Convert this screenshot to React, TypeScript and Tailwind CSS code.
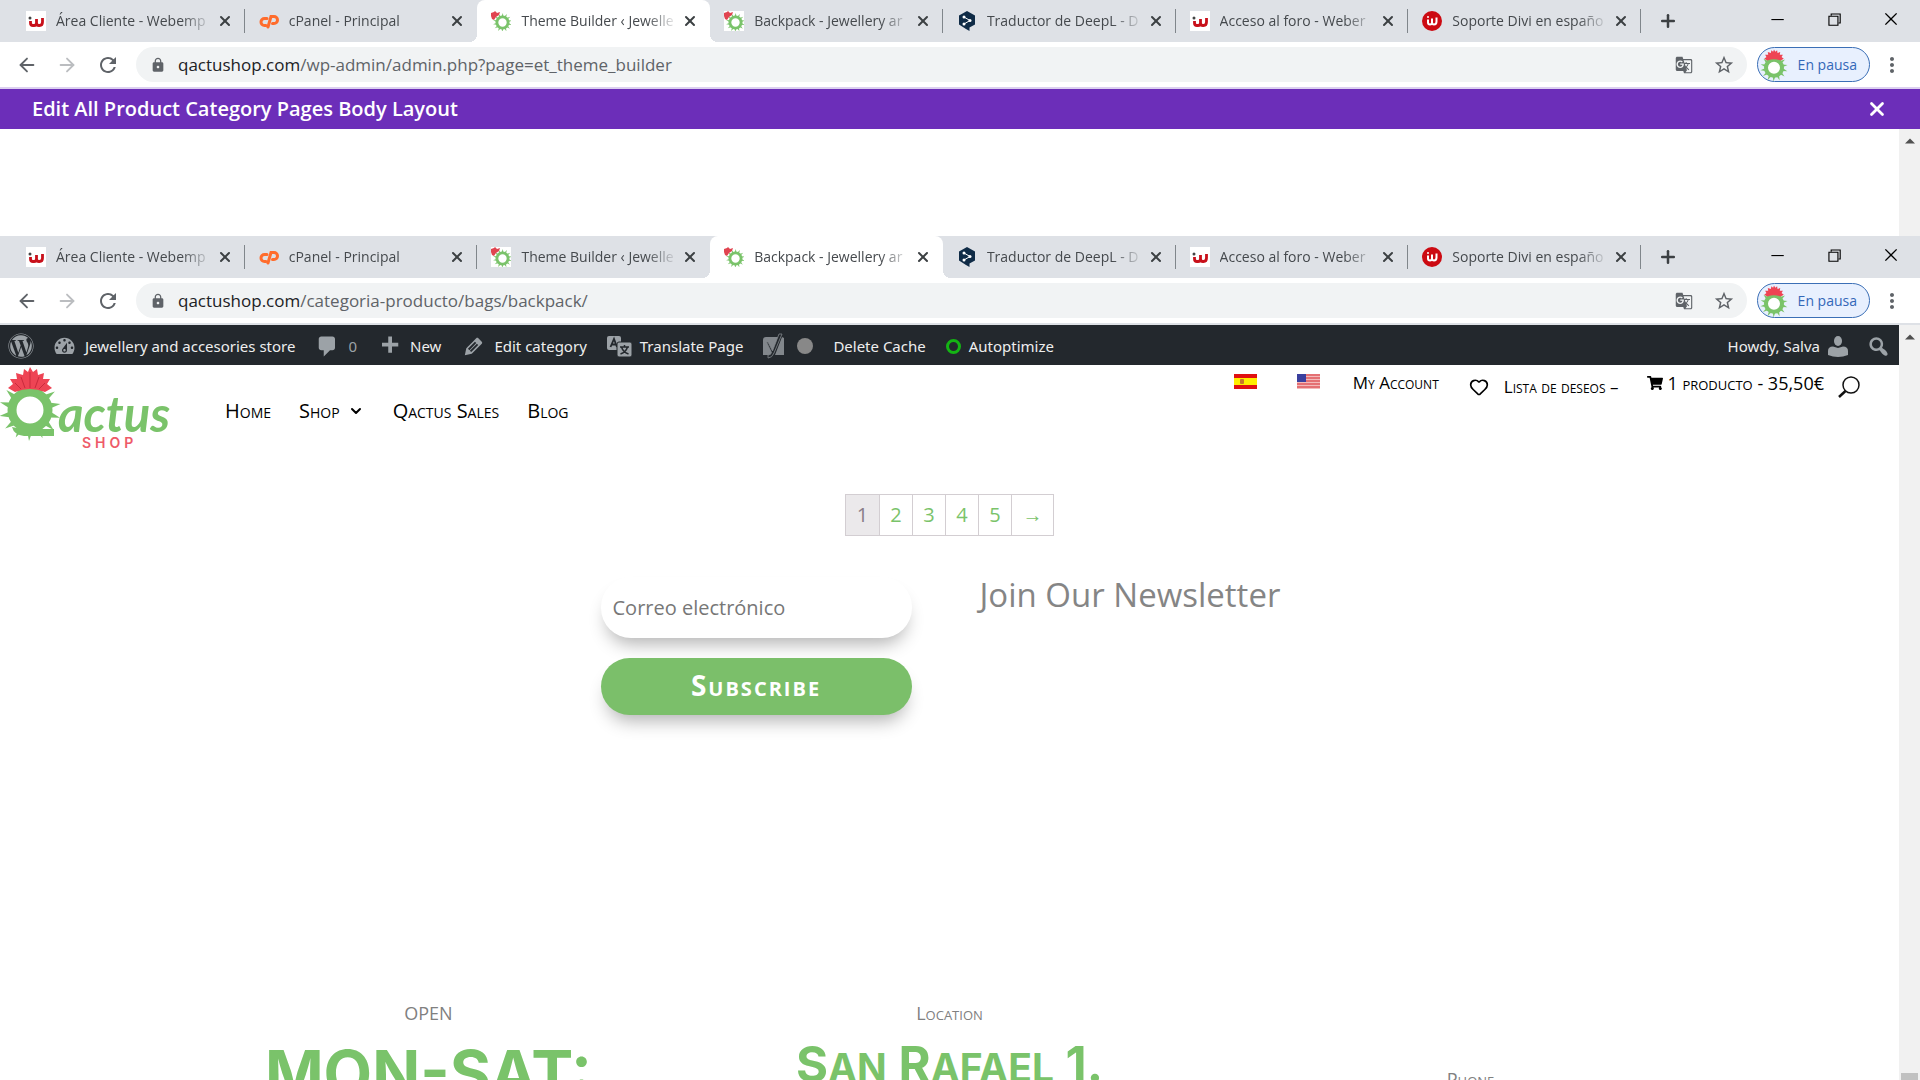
import type { ReactNode } from 'react';
import { ArrowLeft, ArrowRight, ChevronDown, Heart, Plus, X } from 'lucide-react';
import { FaShoppingCart, FaWordpress } from 'react-icons/fa';
import { MdGTranslate, MdLock, MdMoreVert, MdRefresh, MdStarBorder } from 'react-icons/md';
import { VscChromeClose, VscChromeMinimize, VscChromeRestore } from 'react-icons/vsc';

type Favicon = 'webempresa' | 'cpanel' | 'cactus' | 'deepl' | 'soporte';

const tabs: { title: string; icon: Favicon }[] = [
  { title: 'Área Cliente - Webemp', icon: 'webempresa' },
  { title: 'cPanel - Principal', icon: 'cpanel' },
  { title: 'Theme Builder ‹ Jewelle', icon: 'cactus' },
  { title: 'Backpack - Jewellery ar', icon: 'cactus' },
  { title: 'Traductor de DeepL - D', icon: 'deepl' },
  { title: 'Acceso al foro - Weber', icon: 'webempresa' },
  { title: 'Soporte Divi en españo', icon: 'soporte' },
];

const spikes = Array.from({ length: 14 }, (_, i) => i * (360 / 14));

function CactusRing() {
  return (
    <g>
      {spikes.map((angle) => (
        <path key={angle} d="M-3 -20L1 -31L3 -20Z" fill="#7ac36a" transform={`rotate(${angle})`} />
      ))}
      <circle r="18" fill="#fff" stroke="#7ac36a" strokeWidth="9" />
    </g>
  );
}

function Flower() {
  return (
    <path
      d="M-15 12L-22 8L-17 4L-20 -1L-13 -1L-14 -7L-7 -5L-6 -11L-2 -8L0 -13L3 -8L7 -11L8 -5L14 -7L13 -1L20 -1L17 4L22 8L15 12Q0 6 -15 12Z"
      fill="#ee4454"
    />
  );
}

function CactusAvatar() {
  return (
    <svg viewBox="0 0 60 72" className="h-8 w-7" aria-hidden="true">
      <g transform="translate(30 42)">
        <CactusRing />
      </g>
      <g transform="translate(30 14)">
        <Flower />
      </g>
    </svg>
  );
}

function TabIcon({ name }: { name: Favicon }) {
  switch (name) {
    case 'webempresa':
      return (
        <svg viewBox="0 0 20 20" className="size-5 shrink-0" aria-hidden="true">
          <rect width="20" height="20" fill="#fff" />
          <circle cx="4" cy="7" r="1.500" fill="#444" />
          <path d="M4.500 10v2q0 2.500 2.500 2.500h1q2.500 0 2.500-2.500V8M10.500 12q0 2.500 2.500 2.500h.500q3 0 3-3.500V7" fill="none" stroke="#c8101a" strokeWidth="2.800" />
        </svg>
      );
    case 'cpanel':
      return (
        <svg viewBox="0 0 20 20" className="size-5 shrink-0" fill="none" stroke="#ff6c2c" strokeWidth="3" aria-hidden="true">
          <path d="M8 7.500H5.500a3.500 3.500 0 0 0 0 7H7" strokeLinecap="round" />
          <path d="M9 16L12 5.500H15a3.200 3.200 0 0 1 0 7H13.500" strokeLinecap="round" />
        </svg>
      );
    case 'cactus':
      return (
        <svg viewBox="0 0 20 20" className="size-5 shrink-0" aria-hidden="true">
          <rect width="20" height="20" fill="#fff" />
          <g transform="translate(11.500 11.500) scale(.31)">
            <CactusRing />
          </g>
          <path d="M0 2L3 1L4 0L6 2L9 1L8 4L5 6L3 9L1 8L0 5Z" fill="#e04450" />
        </svg>
      );
    case 'deepl':
      return (
        <svg viewBox="0 0 20 20" className="size-5 shrink-0" aria-hidden="true">
          <path d="M10 0L18 4.500V13.500L12.500 16.500V20L9 18L2 13.500V4.500Z" fill="#0f2b46" />
          <path d="M7 6L13 9.500L7 13" fill="none" stroke="#fff" strokeWidth="1" />
          <circle cx="7" cy="6" r="1.500" fill="#fff" />
          <circle cx="13" cy="9.500" r="1.500" fill="#fff" />
          <circle cx="7" cy="13" r="1.500" fill="#fff" />
        </svg>
      );
    case 'soporte':
      return (
        <svg viewBox="0 0 20 20" className="size-5 shrink-0" aria-hidden="true">
          <circle cx="10" cy="10" r="10" fill="#cc0a12" />
          <circle cx="6" cy="6" r="1" fill="#fff" />
          <path d="M6 8.500v3q0 2 2 2t2-2V7.500M10 11.500q0 2 2 2q2.500 0 2.500-3V6.500" fill="none" stroke="#fff" strokeWidth="2" />
        </svg>
      );
  }
}

function BrowserChrome({ active, path, label }: { active: number; path: string; label: string }) {
  return (
    <header className="font-['Open_Sans',sans-serif]">
      <div className="flex h-[42px] items-center bg-[#dee1e6] pl-3">
        {tabs.map((tab, i) => {
          const isActive = i === active;
          const divider = !isActive && i !== active - 1;
          return (
            <div
              key={i}
              className={`relative flex min-w-0 flex-1 items-center self-stretch pl-[14px] pr-3 ${
                isActive
                  ? "rounded-t-lg bg-white before:absolute before:bottom-0 before:-left-2 before:size-2 before:bg-[radial-gradient(circle_at_0_0,transparent_8px,white_8px)] before:content-[''] after:absolute after:bottom-0 after:-right-2 after:size-2 after:bg-[radial-gradient(circle_at_100%_0,transparent_8px,white_8px)] after:content-['']"
                  : ''
              }`}
            >
              <TabIcon name={tab.icon} />
              <button className="ml-[10px] min-w-0 flex-1 overflow-hidden text-left text-sm whitespace-nowrap text-[#45494d] [mask-image:linear-gradient(to_right,black_80%,transparent)]">
                {tab.title}
              </button>
              <button aria-label={`Cerrar ${tab.title}`} className="ml-1 text-[#3c4043]">
                <X className="size-4" strokeWidth={3} />
              </button>
              {divider && <span className="absolute right-0 h-6 w-px bg-[#80868b]" />}
            </div>
          );
        })}
        <div className="flex w-[279px] shrink-0 items-center justify-between self-stretch pr-5 pl-[17px] text-black">
          <button aria-label="Nueva pestaña" className="text-[#3c4043]">
            <Plus className="size-5" strokeWidth={3} />
          </button>
          <div className="flex items-center gap-[39px] pb-[5px]">
            <button aria-label="Minimizar">
              <VscChromeMinimize className="size-[18px]" />
            </button>
            <button aria-label="Restaurar">
              <VscChromeRestore className="size-[18px]" />
            </button>
            <button aria-label="Cerrar">
              <VscChromeClose className="size-[18px]" />
            </button>
          </div>
        </div>
      </div>

      <div className="flex h-[45px] items-center bg-white pr-4 pl-4 text-[#5f6368]">
        <button aria-label="Atrás" className="mr-[18px]">
          <ArrowLeft className="size-[22px]" />
        </button>
        <button aria-label="Adelante" className="mr-[18px] text-[#bbbdc0]">
          <ArrowRight className="size-[22px]" />
        </button>
        <button aria-label="Recargar" className="mr-4">
          <MdRefresh className="size-6" />
        </button>
        <div className="flex h-[35px] flex-1 items-center rounded-full bg-[#f1f3f4] pr-3 pl-[14px]">
          <MdLock className="mr-3 size-4" />
          <div aria-label={label} className="flex-1 text-[17px] leading-6">
            <span className="text-[#202124]">qactushop.com</span>
            {path}
          </div>
          <button aria-label="Traducir esta página" className="mr-5">
            <MdGTranslate className="size-[18px]" />
          </button>
          <button aria-label="Añadir a marcadores">
            <MdStarBorder className="size-[22px]" />
          </button>
        </div>
        <button className="ml-[10px] flex h-[35px] items-center gap-[10px] rounded-full border border-[#3b6fb6] bg-[#e8f0fe] pr-3 pl-[2px] text-sm text-[#3367b8]">
          <CactusAvatar />
          En pausa
        </button>
        <button aria-label="Menú" className="ml-[10px]">
          <MdMoreVert className="size-6" />
        </button>
      </div>
    </header>
  );
}

function Scrollbar({ thumb }: { thumb?: boolean }) {
  return (
    <div className="flex w-[21px] shrink-0 flex-col items-center bg-[#f1f1f1] pt-[9px]">
      <svg viewBox="0 0 10 5" className="h-[6px] w-[10px]" aria-hidden="true">
        <path d="M0 5L5 0L10 5Z" fill="#505050" />
      </svg>
      {thumb && <div className="mt-auto h-[7px] w-[17px] bg-[#c1c1c1]" />}
    </div>
  );
}

function Dashicon({ d }: { d: string }) {
  return (
    <svg viewBox="0 0 20 20" className="size-[25px] shrink-0" fill="#9ca2a7" aria-hidden="true">
      <path d={d} />
    </svg>
  );
}

function AdminItem({ icon, children }: { icon?: ReactNode; children?: ReactNode }) {
  return (
    <a href="#" className="flex items-center gap-2 whitespace-nowrap">
      {icon}
      {children}
    </a>
  );
}

function AdminBar() {
  return (
    <nav className="flex h-10 items-center bg-[#23282d] pt-[2px] pr-2 pl-2 font-['Noto_Sans',sans-serif] text-[15px] text-[#eee]">
      <AdminItem icon={<FaWordpress className="size-[26px] text-[#9ca2a7]" />} />
      <div className="ml-[18px] flex items-center gap-5">
        <AdminItem
          icon={
            <Dashicon d="M3.760 16h12.480c1.100-1.370 1.760-3.110 1.760-5 0-4.420-3.580-8-8-8s-8 3.580-8 8c0 1.890.660 3.630 1.760 5zM10 4c.550 0 1 .450 1 1s-.450 1-1 1-1-.450-1-1 .450-1 1-1zM6 6c.550 0 1 .450 1 1s-.450 1-1 1-1-.450-1-1 .450-1 1-1zm8 0c.550 0 1 .450 1 1s-.450 1-1 1-1-.450-1-1 .450-1 1-1zm-5.370 5.550L12 7v6c0 1.100-.900 2-2 2s-2-.900-2-2c0-.570.240-1.080.630-1.450zM4 10c.550 0 1 .450 1 1s-.450 1-1 1-1-.450-1-1 .450-1 1-1zm12 0c.550 0 1 .450 1 1s-.450 1-1 1-1-.450-1-1 .450-1 1-1zm-5 3c0-.550-.450-1-1-1s-1 .450-1 1 .450 1 1 1 1-.450 1-1z" />
          }
        >
          Jewellery and accesories store
        </AdminItem>
        <AdminItem icon={<Dashicon d="M5 2h9c1.100 0 2 .900 2 2v7c0 1.100-.900 2-2 2h-2l-5 5v-5H5c-1.100 0-2-.900-2-2V4c0-1.100.900-2 2-2z" />}>
          <span className="text-[#9ca2a7]">0</span>
        </AdminItem>
        <AdminItem icon={<Dashicon d="M17 7v3h-5v5H9v-5H4V7h5V2h3v5h5z" />}>New</AdminItem>
        <AdminItem
          icon={
            <Dashicon d="M13.890 3.390l2.710 2.720c.460.460.420 1.240.030 1.640l-8.010 8.020-5.560 1.160 1.160-5.580s7.600-7.630 7.990-8.030c.390-.390 1.220-.390 1.680.070zm-2.730 2.790l-5.590 5.610 1.110 1.110 5.540-5.650zm-2.970 8.230l5.580-5.600-1.070-1.080-5.590 5.600z" />
          }
        >
          Edit category
        </AdminItem>
        <AdminItem
          icon={
            <svg viewBox="0 0 25 21" className="h-[21px] w-[25px]" aria-hidden="true">
              <rect x="0" y="0" width="14" height="14" rx="2" fill="#9ca2a7" />
              <path d="M3.500 11L7 3L10 11M5 8.500H9" fill="none" stroke="#23282d" strokeWidth="1.800" />
              <rect x="10" y="6" width="15" height="15" rx="2" fill="#9ca2a7" stroke="#23282d" />
              <path d="M13 11H22M17.500 9V11M20.500 11Q19 16 13.500 18M14.500 11Q16 16 21.500 18" fill="none" stroke="#23282d" strokeWidth="1.500" />
            </svg>
          }
        >
          Translate Page
        </AdminItem>
        <AdminItem
          icon={
            <svg viewBox="0 0 22 26" className="h-[26px] w-[22px]" aria-hidden="true">
              <path d="M3 4H16L10 22H0V7Q0 4 3 4ZM21 5V22H12L19 4Z" fill="#82878c" />
              <path d="M5 9L9.500 18L16 1H19L11 20Q9 25 5 25V22Q8 22 8.500 19.500L3.500 9Z" fill="#23282d" stroke="#82878c" strokeWidth=".8" />
            </svg>
          }
        >
          <span className="ml-1 size-4 rounded-full bg-[#888]" />
        </AdminItem>
        <AdminItem>Delete Cache</AdminItem>
        <AdminItem icon={<span className="size-[15px] rounded-full border-[3px] border-[#14b414]" />}>Autoptimize</AdminItem>
      </div>
      <div className="ml-auto flex items-center gap-[18px]">
        <AdminItem>
          Howdy, Salva
          <svg viewBox="0 0 20 21" className="h-[21px] w-5" fill="#9ca2a7" aria-hidden="true">
            <ellipse cx="10" cy="5" rx="4" ry="5" />
            <path d="M0 19V15Q0 10.500 5 10.500L10 12L15 10.500Q20 10.500 20 15V19Q10 23 0 19Z" />
          </svg>
        </AdminItem>
        <button aria-label="Search">
          <Dashicon d="M12.140 4.180c1.870 1.870 2.110 4.750.720 6.890.120.100.220.210.360.310.200.160.470.360.810.590.340.240.560.390.660.470.420.310.730.570.940.780.320.320.600.650.840 1 .250.350.440.690.590 1.040.140.350.210.680.180 1-.020.320-.140.590-.360.810s-.490.340-.810.360c-.310.020-.650-.040-.990-.190-.350-.140-.700-.340-1.040-.590-.350-.240-.680-.520-1-.840-.210-.210-.470-.520-.770-.930-.100-.130-.250-.350-.470-.660-.220-.320-.400-.570-.560-.780-.160-.200-.290-.350-.440-.500-2.070 1.090-4.690.760-6.440-.980-2.140-2.150-2.140-5.640 0-7.780 2.150-2.150 5.630-2.150 7.780 0zm-1.410 6.360c1.360-1.370 1.360-3.580 0-4.950-1.370-1.370-3.590-1.370-4.950 0-1.370 1.370-1.370 3.580 0 4.950 1.360 1.370 3.580 1.370 4.950 0z" />
        </button>
      </div>
    </nav>
  );
}

function Logo() {
  return (
    <a href="#" aria-label="Qactus Shop" className="block">
      <svg viewBox="0 0 172 86" className="h-[86px] w-[172px]">
        <g transform="translate(30 45)">
          <CactusRing />
        </g>
        <path d="M22 64H54V71H24Q14 70 12 62Z" fill="#7ac36a" />
        <g transform="translate(30 15)">
          <Flower />
          <path d="M0 8V-8M-5 8L-9 -3M5 8L9 -3M-9 9L-15 3M9 9L15 3" stroke="#c92a3c" strokeWidth="1" />
        </g>
        <text x="58" y="67" fill="#7ac36a" className="font-['Lato',sans-serif] text-[49px] font-bold italic">
          actus
        </text>
        <text x="82" y="83" fill="#ee5a68" className="font-['Inter',sans-serif] text-[14px] font-semibold tracking-[4px]">
          SHOP
        </text>
      </svg>
    </a>
  );
}

function SpainFlag() {
  return (
    <svg viewBox="0 0 23 15" className="h-[15px] w-[23px]" role="img" aria-label="Español">
      <rect width="23" height="15" fill="#e01010" />
      <rect y="4" width="23" height="7" fill="#ffee00" />
      <rect x="6" y="5" width="4" height="5" rx="1" fill="#c9762a" />
    </svg>
  );
}

function UsFlag() {
  return (
    <svg viewBox="0 0 23 15" className="h-[15px] w-[23px]" role="img" aria-label="English">
      <rect width="23" height="15" fill="#f3b9b9" />
      <path d="M0 1H23M0 4H23M0 7H23M0 10H23M0 13H23" stroke="#e0585c" strokeWidth="1.500" />
      <rect width="9" height="8" fill="#3a3f9e" />
    </svg>
  );
}

function SiteHeader() {
  return (
    <div className="flex items-start font-['Open_Sans',sans-serif] text-black">
      <Logo />
      <nav className="ml-[53px] flex items-center gap-7 pt-8 text-xl leading-7 [font-variant-caps:small-caps]">
        <a href="#">Home</a>
        <a href="#" className="flex items-center gap-2">
          Shop
          <ChevronDown className="mr-px size-4" strokeWidth={3} />
        </a>
        <a href="#">Qactus Sales</a>
        <a href="#">Blog</a>
      </nav>
      <div className="mr-[39px] ml-auto flex items-start pt-1 text-[17px] leading-7 [font-variant-caps:small-caps]">
        <a href="#" className="mt-[5px]">
          <SpainFlag />
        </a>
        <a href="#" className="mt-[5px] ml-10">
          <UsFlag />
        </a>
        <a href="#" className="ml-[33px]">
          My Account
        </a>
        <a href="#" className="ml-[30px] flex items-center gap-[15px] pt-1">
          <Heart className="size-5" strokeWidth={2} />
          Lista de deseos –
        </a>
        <a href="#" className="ml-[29px] flex items-center gap-1 text-lg leading-7">
          <FaShoppingCart className="size-4" />1 producto - 35,50€
        </a>
        <button aria-label="Buscar" className="ml-[14px] pt-[7px]">
          <svg viewBox="0 0 22 22" className="size-[22px]" fill="none" stroke="#111" strokeWidth="1.500" aria-hidden="true">
            <circle cx="13" cy="9" r="8" />
            <path d="M7.500 15L1 21" strokeWidth="2.500" />
          </svg>
        </button>
      </div>
    </div>
  );
}

function Pagination() {
  return (
    <nav aria-label="Product pagination" className="mx-auto mt-[43px] flex w-fit border border-[#d3ced2] font-['Open_Sans',sans-serif] text-xl text-[#7ac36a]">
      <span aria-current="page" className="flex h-10 w-[33px] items-center justify-center bg-[#ebe9eb] text-[#8a7e88]">
        1
      </span>
      {[2, 3, 4, 5].map((n) => (
        <a key={n} href="#" className="flex h-10 w-[33px] items-center justify-center border-l border-[#d3ced2]">
          {n}
        </a>
      ))}
      <a href="#" className="flex h-10 w-[42px] items-center justify-center border-l border-[#d3ced2] font-['Liberation_Serif',serif]">
        →
      </a>
    </nav>
  );
}

function Newsletter() {
  return (
    <section className="mx-auto mt-[41px] flex w-[698px] gap-[68px] font-['Open_Sans',sans-serif]">
      <form className="flex w-[311px] shrink-0 flex-col gap-5">
        <input
          type="email"
          aria-label="Correo electrónico"
          placeholder="Correo electrónico"
          className="h-[61px] rounded-[30px] bg-white px-3 text-xl shadow-[0_12px_18px_-6px_rgba(0,0,0,0.3)] placeholder:text-[#777]"
        />
        <button
          type="button"
          className="h-[57px] rounded-[30px] bg-[#7bbf6a] pb-[3px] text-[28px] leading-8 font-bold tracking-[2px] text-white shadow-[0_12px_18px_-6px_rgba(0,0,0,0.3)] [font-variant-caps:small-caps]"
        >
          Subscribe
        </button>
      </form>
      <h2 className="text-[33px] leading-9 whitespace-nowrap text-[#858585]">Join Our Newsletter</h2>
    </section>
  );
}

function ContactInfo() {
  return (
    <section className="mx-auto mt-[284px] grid w-4/5 grid-cols-3 gap-11 text-center font-['Open_Sans',sans-serif] text-lg leading-7 text-[#808080]">
      <div>
        <p>OPEN</p>
        <p className="mt-3 font-['Inter',sans-serif] text-[63px] leading-[68px] font-bold whitespace-nowrap text-[#7ac36a]">MON-SAT:</p>
      </div>
      <div>
        <p className="[font-variant-caps:small-caps]">Location</p>
        <p className="mt-3 font-['Inter',sans-serif] text-[49px] leading-[52px] font-bold whitespace-nowrap text-[#7ac36a]">
          S<span className="text-[39px] uppercase">an</span> R<span className="text-[39px] uppercase">afael</span> 1.
        </p>
      </div>
      <div className="pt-[66px]">
        <p className="[font-variant-caps:small-caps]">Phone</p>
      </div>
    </section>
  );
}

export default function App() {
  return (
    <div className="flex h-screen flex-col overflow-hidden bg-white">
      <BrowserChrome active={2} path="/wp-admin/admin.php?page=et_theme_builder" label="Theme Builder" />
      <div className="flex h-[42px] shrink-0 items-center justify-between border-t-2 border-[#dcd0f0] bg-[#6c2eb9] pr-8 pl-8 font-['Open_Sans',sans-serif] text-white">
        <h1 className="text-xl font-semibold">Edit All Product Category Pages Body Layout</h1>
        <button aria-label="Close">
          <X className="size-[22px]" strokeWidth={3} />
        </button>
      </div>
      <div className="flex h-[107px] shrink-0 justify-end">
        <Scrollbar />
      </div>

      <BrowserChrome active={3} path="/categoria-producto/bags/backpack/" label="Backpack" />
      <div className="flex min-h-0 flex-1 border-t-2 border-[#dee1e6]">
        <main className="min-w-0 flex-1 overflow-hidden">
          <AdminBar />
          <SiteHeader />
          <Pagination />
          <Newsletter />
          <ContactInfo />
        </main>
        <Scrollbar thumb />
      </div>
    </div>
  );
}
